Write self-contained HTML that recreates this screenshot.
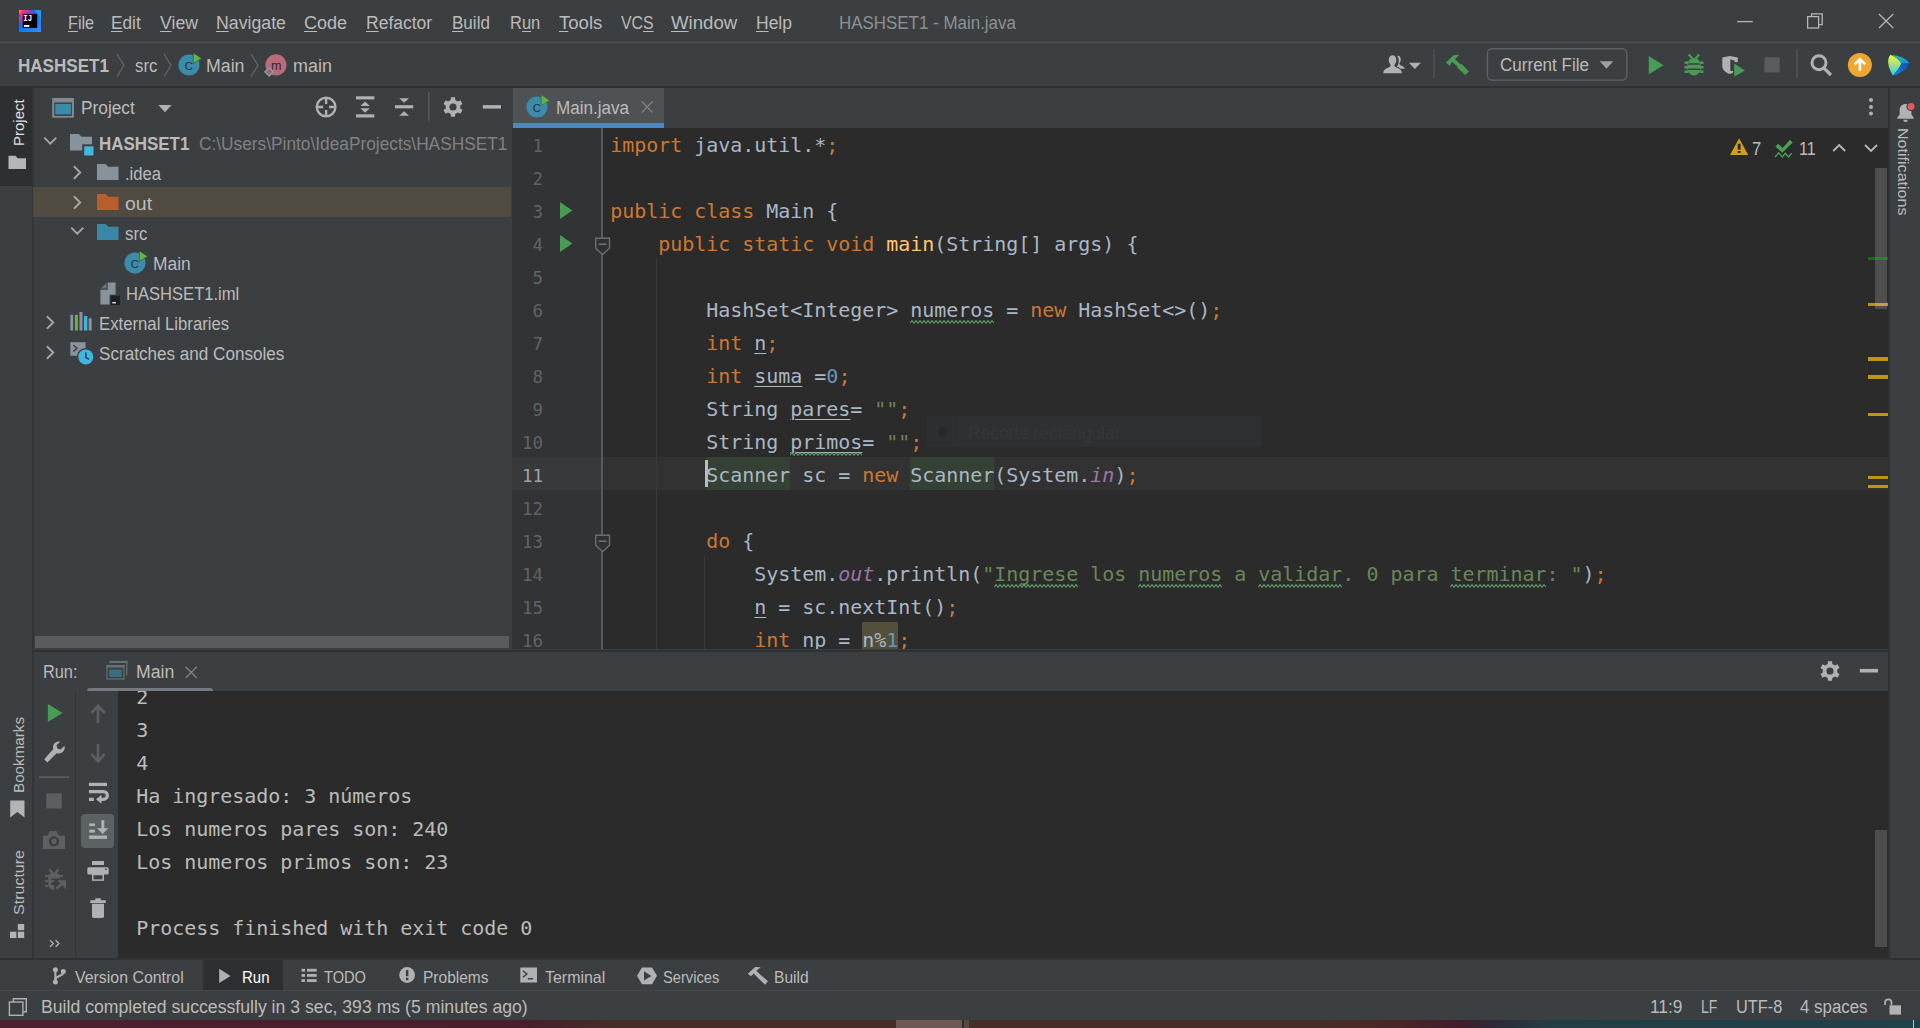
<!DOCTYPE html>
<html lang="en"><head><meta charset="utf-8"><title>HASHSET1 - Main.java</title>
<style>
html,body{margin:0;padding:0;background:#3c3f41;}
body{width:1920px;height:1028px;position:relative;overflow:hidden;font-family:"Liberation Sans", sans-serif;}
.r{position:absolute;display:block;}
.t{position:absolute;display:inline-block;white-space:pre;line-height:24px;height:24px;transform-origin:0 0;font-family:"Liberation Sans", sans-serif;}
.t u{text-decoration:underline;text-decoration-thickness:1px;text-underline-offset:1.500px;}
.c{position:absolute;white-space:pre;font-family:"DejaVu Sans Mono", "Liberation Mono", monospace;font-size:20px;line-height:33px;height:33px;color:#a9b7c6;letter-spacing:-0.04px;}
.k{color:#cc7832}.s{color:#6a8759}.n{color:#6897bb}.f{color:#ffc66d}.p{color:#9876aa;font-style:italic}
.ul{text-decoration:underline;text-decoration-thickness:1px;text-underline-offset:3px;}
.ln{position:absolute;white-space:pre;font-family:"DejaVu Sans Mono", "Liberation Mono", monospace;font-size:17.5px;line-height:33px;height:33px;color:#606366;text-align:right;width:40px;}
</style></head><body>
<div class="r" style="left:0px;top:42px;width:1920px;height:1px;background:#515456;"></div>
<div class="r" style="left:0px;top:86px;width:1920px;height:1.5px;background:#2f3133;"></div>
<div class="r" style="left:0px;top:87px;width:32px;height:933px;background:#3c3f41;"></div>
<div class="r" style="left:32px;top:87px;width:1.5px;height:871px;background:#323436;"></div>
<div class="r" style="left:0px;top:87px;width:32px;height:99px;background:#2d2f30;"></div>
<div class="r" style="left:1888px;top:87px;width:1.8px;height:871px;background:#2e3032;"></div>
<div class="r" style="left:33px;top:187px;width:478px;height:30px;background:#4f4b41;"></div>
<div class="r" style="left:35px;top:636px;width:474px;height:12px;background:#595b5d;"></div>
<div class="r" style="left:513px;top:88px;width:151px;height:40px;background:#4e5254;"></div>
<div class="r" style="left:513px;top:123px;width:151px;height:5px;background:#4a88c7;"></div>
<div class="r" style="left:512px;top:127.5px;width:1376px;height:1px;background:#323232;"></div>
<div class="r" style="left:512px;top:128px;width:1376px;height:521px;background:#2b2b2b;"></div>
<div class="r" style="left:512px;top:128px;width:90px;height:521px;background:#313335;"></div>
<div class="r" style="left:601px;top:128px;width:2px;height:521px;background:#5a5a5a;"></div>
<div class="r" style="left:603px;top:457px;width:1285px;height:33px;background:#323232;"></div>
<div class="r" style="left:512px;top:457px;width:89px;height:33px;background:#37393b;"></div>
<div class="r" style="left:656px;top:259px;width:1px;height:390px;background:#3a3a3a;"></div>
<div class="r" style="left:704px;top:556px;width:1px;height:93px;background:#3a3a3a;"></div>
<div class="r" style="left:927px;top:416px;width:334px;height:31px;background:#2e3032;"></div>
<div class="r" style="left:927px;top:416px;width:30px;height:31px;background:#2c2f32;"></div>
<div class="r" style="left:938px;top:427px;width:9px;height:9px;border-radius:5px;background:#272a2d"></div>
<span class="t " style="left:967.70px;top:421.26px;font-size:18px;color:#33373a;transform:scaleX(0.9646);">Recorte rectangular</span>
<div class="r" style="left:34px;top:649px;width:1854px;height:1px;background:#3c3f41;"></div>
<div class="r" style="left:34px;top:650px;width:1854px;height:1.6px;background:#2f3133;"></div>
<div class="r" style="left:34px;top:691px;width:1854px;height:266.5px;background:#2b2b2b;"></div>
<div class="r" style="left:34px;top:691px;width:84px;height:266.5px;background:#3c3f41;"></div>
<div class="r" style="left:75px;top:691px;width:1px;height:266.5px;background:#323436;"></div>
<div class="r" style="left:87px;top:687.5px;width:126px;height:3.5px;background:#747a80;border-radius:3px 3px 0 0"></div>
<div class="r" style="left:81px;top:814px;width:33px;height:34px;background:#5c6164;border-radius:4px"></div>
<div class="r" style="left:39px;top:776.5px;width:30px;height:1px;background:#555759;"></div>
<div class="r" style="left:1875px;top:830px;width:12px;height:117px;background:#4d4d4d;"></div>
<div class="r" style="left:1875px;top:168px;width:12px;height:141px;background:#4e4e4e;"></div>
<div class="r" style="left:1868px;top:257px;width:20px;height:3px;background:#116e15;"></div>
<div class="r" style="left:1868px;top:303.3px;width:20px;height:3px;background:#b8901a;"></div>
<div class="r" style="left:1875px;top:303.3px;width:12px;height:3px;background:#c0a040;"></div>
<div class="r" style="left:1875px;top:257px;width:12px;height:3px;background:#2f8133;"></div>
<div class="r" style="left:1868px;top:357.2px;width:20px;height:3.4px;background:#be9516;"></div>
<div class="r" style="left:1868px;top:375.3px;width:20px;height:3.4px;background:#be9516;"></div>
<div class="r" style="left:1868px;top:412.9px;width:20px;height:3.4px;background:#be9516;"></div>
<div class="r" style="left:1868px;top:475.8px;width:20px;height:3.4px;background:#be9516;"></div>
<div class="r" style="left:1868px;top:484.8px;width:20px;height:3.4px;background:#be9516;"></div>
<div class="r" style="left:0px;top:957.5px;width:1920px;height:2px;background:#2f3133;"></div>
<div class="r" style="left:202.5px;top:959.5px;width:80.5px;height:30.5px;background:#2d2f30;"></div>
<div class="r" style="left:0px;top:990px;width:1920px;height:1px;background:#45484a;"></div>
<div class="r" style="left:0px;top:1020px;width:1920px;height:8px;background:linear-gradient(90deg,#4b2131 0,#481e2c 520px,#46252a 560px,#452e27 620px,#452e27 1300px,#4a2626 1400px,#401c2c 1460px,#2c2b3a 1500px,#233d44 1545px,#20424a 1920px);"></div>
<div class="r" style="left:896px;top:1020px;width:66px;height:8px;background:#6b5a53;"></div>
<div class="r" style="left:962px;top:1020px;width:2px;height:8px;background:#3a2a27;"></div>
<div class="r" style="left:964px;top:1020px;width:5px;height:8px;background:#5a4843;"></div>
<div class="r" style="left:1912.5px;top:1020px;width:1.5px;height:8px;background:#b9c4c6;"></div>
<span class="t " style="left:67.80px;top:11.06px;font-size:18px;color:#bbbbbb;transform:scaleX(0.8995);"><u>F</u>ile</span>
<span class="t " style="left:111.00px;top:11.06px;font-size:18px;color:#bbbbbb;transform:scaleX(0.9571);"><u>E</u>dit</span>
<span class="t " style="left:160.20px;top:11.06px;font-size:18px;color:#bbbbbb;transform:scaleX(0.9818);"><u>V</u>iew</span>
<span class="t " style="left:216.00px;top:11.06px;font-size:18px;color:#bbbbbb;transform:scaleX(0.9839);"><u>N</u>avigate</span>
<span class="t " style="left:303.80px;top:11.06px;font-size:18px;color:#bbbbbb;transform:scaleX(1.0012);"><u>C</u>ode</span>
<span class="t " style="left:366.00px;top:11.06px;font-size:18px;color:#bbbbbb;transform:scaleX(0.9731);"><u>R</u>efactor</span>
<span class="t " style="left:452.40px;top:11.06px;font-size:18px;color:#bbbbbb;transform:scaleX(0.9464);"><u>B</u>uild</span>
<span class="t " style="left:510.40px;top:11.06px;font-size:18px;color:#bbbbbb;transform:scaleX(0.9173);">R<u>u</u>n</span>
<span class="t " style="left:559.20px;top:11.06px;font-size:18px;color:#bbbbbb;transform:scaleX(1.0302);"><u>T</u>ools</span>
<span class="t " style="left:620.70px;top:11.06px;font-size:18px;color:#bbbbbb;transform:scaleX(0.8803);">VC<u>S</u></span>
<span class="t " style="left:670.60px;top:11.06px;font-size:18px;color:#bbbbbb;transform:scaleX(1.0339);"><u>W</u>indow</span>
<span class="t " style="left:756.40px;top:11.06px;font-size:18px;color:#bbbbbb;transform:scaleX(0.9722);"><u>H</u>elp</span>
<span class="t " style="left:839.00px;top:11.06px;font-size:18px;color:#8e9193;transform:scaleX(0.9406);">HASHSET1 - Main.java</span>
<span class="t " style="left:18.00px;top:54.16px;font-size:18px;color:#bbbbbb;font-weight:bold;transform:scaleX(0.9466);">HASHSET1</span>
<span class="t " style="left:135.00px;top:54.16px;font-size:18px;color:#bbbbbb;transform:scaleX(0.9333);">src</span>
<span class="t " style="left:206.40px;top:54.16px;font-size:18px;color:#bbbbbb;transform:scaleX(0.9868);">Main</span>
<span class="t " style="left:293.00px;top:54.16px;font-size:18px;color:#bbbbbb;transform:scaleX(0.9970);">main</span>
<span class="t " style="left:1500.20px;top:53.26px;font-size:18px;color:#bbbbbb;transform:scaleX(0.9465);">Current File</span>
<span class="t " style="left:81.40px;top:95.56px;font-size:18px;color:#bbbbbb;transform:scaleX(0.9602);">Project</span>
<span class="t " style="left:98.50px;top:131.76px;font-size:18px;color:#bbbbbb;font-weight:bold;transform:scaleX(0.9414);">HASHSET1</span>
<span class="t " style="left:199.30px;top:131.76px;font-size:18px;color:#808284;transform:scaleX(0.9604);">C:\Users\Pinto\IdeaProjects\HASHSET1</span>
<span class="t " style="left:125.10px;top:161.76px;font-size:18px;color:#bbbbbb;transform:scaleX(0.9245);">.idea</span>
<span class="t " style="left:125.10px;top:191.76px;font-size:18px;color:#bbbbbb;transform:scaleX(1.0826);">out</span>
<span class="t " style="left:125.10px;top:221.76px;font-size:18px;color:#bbbbbb;transform:scaleX(0.9333);">src</span>
<span class="t " style="left:152.50px;top:251.76px;font-size:18px;color:#bbbbbb;transform:scaleX(0.9663);">Main</span>
<span class="t " style="left:125.60px;top:281.76px;font-size:18px;color:#bbbbbb;transform:scaleX(0.9209);">HASHSET1.iml</span>
<span class="t " style="left:98.50px;top:311.76px;font-size:18px;color:#bbbbbb;transform:scaleX(0.9296);">External Libraries</span>
<span class="t " style="left:98.50px;top:341.76px;font-size:18px;color:#bbbbbb;transform:scaleX(0.9502);">Scratches and Consoles</span>
<span class="t " style="left:555.70px;top:96.06px;font-size:18px;color:#bbbbbb;transform:scaleX(0.9475);">Main.java</span>
<span class="t " style="left:1752.20px;top:137.16px;font-size:18px;color:#bbbbbb;transform:scaleX(0.9285);">7</span>
<span class="t " style="left:1798.50px;top:137.16px;font-size:18px;color:#bbbbbb;transform:scaleX(0.8936);">11</span>
<span class="t " style="left:42.70px;top:659.76px;font-size:18px;color:#bbbbbb;transform:scaleX(0.9071);">Run:</span>
<span class="t " style="left:135.70px;top:659.76px;font-size:18px;color:#bbbbbb;transform:scaleX(0.9791);">Main</span>
<span class="t " style="left:75.20px;top:965.28px;font-size:16.5px;color:#bbbbbb;transform:scaleX(0.9635);">Version Control</span>
<span class="t " style="left:242.20px;top:965.28px;font-size:16.5px;color:#ffffff;transform:scaleX(0.9082);">Run</span>
<span class="t " style="left:324.20px;top:965.28px;font-size:16.5px;color:#bbbbbb;transform:scaleX(0.8865);">TODO</span>
<span class="t " style="left:423.40px;top:965.28px;font-size:16.5px;color:#bbbbbb;transform:scaleX(0.9397);">Problems</span>
<span class="t " style="left:545.40px;top:965.28px;font-size:16.5px;color:#bbbbbb;transform:scaleX(0.9670);">Terminal</span>
<span class="t " style="left:663.40px;top:965.28px;font-size:16.5px;color:#bbbbbb;transform:scaleX(0.8897);">Services</span>
<span class="t " style="left:774.20px;top:965.28px;font-size:16.5px;color:#bbbbbb;transform:scaleX(0.9454);">Build</span>
<span class="t " style="left:40.95px;top:994.96px;font-size:18px;color:#bbbbbb;transform:scaleX(0.9809);">Build completed successfully in 3 sec, 393 ms (5 minutes ago)</span>
<span class="t " style="left:1650.20px;top:994.96px;font-size:18px;color:#bbbbbb;transform:scaleX(0.9643);">11:9</span>
<span class="t " style="left:1701.40px;top:994.96px;font-size:18px;color:#bbbbbb;transform:scaleX(0.7756);">LF</span>
<span class="t " style="left:1736.40px;top:994.96px;font-size:18px;color:#bbbbbb;transform:scaleX(0.9078);">UTF-8</span>
<span class="t " style="left:1799.70px;top:994.96px;font-size:18px;color:#bbbbbb;transform:scaleX(0.9369);">4 spaces</span>
<span class="t" style="left:6.63px;top:145.70px;font-size:15.2px;color:#e0e0e0;transform:rotate(-90deg) scaleX(0.9877)">Project</span>
<span class="t" style="left:6.53px;top:793.00px;font-size:15.2px;color:#bbbbbb;transform:rotate(-90deg) scaleX(1.0004)">Bookmarks</span>
<span class="t" style="left:6.63px;top:914.80px;font-size:15.2px;color:#bbbbbb;transform:rotate(-90deg) scaleX(1.0548)">Structure</span>
<span class="t" style="left:1914.77px;top:128.00px;font-size:15.2px;color:#bbbbbb;transform:rotate(90deg) scaleX(1.0576)">Notifications</span>
<div class="r" style="left:512px;top:128px;width:1376px;height:521px;overflow:hidden"><div class="r" style="left:-512px;top:-128px;width:1920px;height:1028px">
<div class="r" style="left:706.3px;top:457px;width:84px;height:33px;background:#344134;"></div>
<div class="r" style="left:910.3px;top:457px;width:84px;height:33px;background:#344134;"></div>
<div class="r" style="left:862.3px;top:622px;width:36px;height:33px;background:#52503a;"></div>
<div class="c" style="left:610.3px;top:129px"><span class="k">import</span> java.util.*<span class="k">;</span></div>
<div class="c" style="left:610.3px;top:195px"><span class="k">public class</span> Main {</div>
<div class="c" style="left:658.3px;top:228px"><span class="k">public static void</span> <span class="f">main</span>(String[] args) {</div>
<div class="c" style="left:706.3px;top:294px">HashSet&lt;Integer&gt; numeros = <span class="k">new</span> HashSet&lt;&gt;()<span class="k">;</span></div>
<div class="c" style="left:706.3px;top:327px"><span class="k">int</span> <span class="ul">n</span><span class="k">;</span></div>
<div class="c" style="left:706.3px;top:360px"><span class="k">int</span> <span class="ul">suma</span> =<span class="n">0</span><span class="k">;</span></div>
<div class="c" style="left:706.3px;top:393px">String <span class="ul">pares</span>= <span class="s">""</span><span class="k">;</span></div>
<div class="c" style="left:706.3px;top:426px">String <span class="ul">primos</span>= <span class="s">""</span><span class="k">;</span></div>
<div class="c" style="left:706.3px;top:459px">Scanner sc = <span class="k">new</span> Scanner(System.<span class="p">in</span>)<span class="k">;</span></div>
<div class="c" style="left:706.3px;top:525px"><span class="k">do</span> {</div>
<div class="c" style="left:754.3px;top:558px">System.<span class="p">out</span>.println(<span class="s">"Ingrese los numeros a validar. 0 para terminar: "</span>)<span class="k">;</span></div>
<div class="c" style="left:754.3px;top:591px"><span class="ul">n</span> = sc.nextInt()<span class="k">;</span></div>
<div class="c" style="left:754.3px;top:624px"><span class="k">int</span> np = n%<span class="n">1</span><span class="k">;</span></div>
<svg class="r" style="left:910.3px;top:319.6px;" width="84" height="4" viewBox="0 0 84 4"><path d="M0 3.300 L2 0.6 L4 3.3 L6 0.6 L8 3.3 L10 0.6 L12 3.3 L14 0.6 L16 3.3 L18 0.6 L20 3.3 L22 0.6 L24 3.3 L26 0.6 L28 3.3 L30 0.6 L32 3.3 L34 0.6 L36 3.3 L38 0.6 L40 3.3 L42 0.6 L44 3.3 L46 0.6 L48 3.3 L50 0.6 L52 3.3 L54 0.6 L56 3.3 L58 0.6 L60 3.3 L62 0.6 L64 3.3 L66 0.6 L68 3.3 L70 0.6 L72 3.3 L74 0.6 L76 3.3 L78 0.6 L80 3.3 L82 0.6 L84 3.3" fill="none" stroke="#619f6a" stroke-width="1.050"/></svg>
<svg class="r" style="left:790.3px;top:451.6px;" width="72" height="4" viewBox="0 0 72 4"><path d="M0 3.300 L2 0.6 L4 3.3 L6 0.6 L8 3.3 L10 0.6 L12 3.3 L14 0.6 L16 3.3 L18 0.6 L20 3.3 L22 0.6 L24 3.3 L26 0.6 L28 3.3 L30 0.6 L32 3.3 L34 0.6 L36 3.3 L38 0.6 L40 3.3 L42 0.6 L44 3.3 L46 0.6 L48 3.3 L50 0.6 L52 3.3 L54 0.6 L56 3.3 L58 0.6 L60 3.3 L62 0.6 L64 3.3 L66 0.6 L68 3.3 L70 0.6 L72 3.3" fill="none" stroke="#619f6a" stroke-width="1.050"/></svg>
<svg class="r" style="left:994.3px;top:583.6px;" width="84" height="4" viewBox="0 0 84 4"><path d="M0 3.300 L2 0.6 L4 3.3 L6 0.6 L8 3.3 L10 0.6 L12 3.3 L14 0.6 L16 3.3 L18 0.6 L20 3.3 L22 0.6 L24 3.3 L26 0.6 L28 3.3 L30 0.6 L32 3.3 L34 0.6 L36 3.3 L38 0.6 L40 3.3 L42 0.6 L44 3.3 L46 0.6 L48 3.3 L50 0.6 L52 3.3 L54 0.6 L56 3.3 L58 0.6 L60 3.3 L62 0.6 L64 3.3 L66 0.6 L68 3.3 L70 0.6 L72 3.3 L74 0.6 L76 3.3 L78 0.6 L80 3.3 L82 0.6 L84 3.3" fill="none" stroke="#619f6a" stroke-width="1.050"/></svg>
<svg class="r" style="left:1138.3px;top:583.6px;" width="84" height="4" viewBox="0 0 84 4"><path d="M0 3.300 L2 0.6 L4 3.3 L6 0.6 L8 3.3 L10 0.6 L12 3.3 L14 0.6 L16 3.3 L18 0.6 L20 3.3 L22 0.6 L24 3.3 L26 0.6 L28 3.3 L30 0.6 L32 3.3 L34 0.6 L36 3.3 L38 0.6 L40 3.3 L42 0.6 L44 3.3 L46 0.6 L48 3.3 L50 0.6 L52 3.3 L54 0.6 L56 3.3 L58 0.6 L60 3.3 L62 0.6 L64 3.3 L66 0.6 L68 3.3 L70 0.6 L72 3.3 L74 0.6 L76 3.3 L78 0.6 L80 3.3 L82 0.6 L84 3.3" fill="none" stroke="#619f6a" stroke-width="1.050"/></svg>
<svg class="r" style="left:1258.3px;top:583.6px;" width="84" height="4" viewBox="0 0 84 4"><path d="M0 3.300 L2 0.6 L4 3.3 L6 0.6 L8 3.3 L10 0.6 L12 3.3 L14 0.6 L16 3.3 L18 0.6 L20 3.3 L22 0.6 L24 3.3 L26 0.6 L28 3.3 L30 0.6 L32 3.3 L34 0.6 L36 3.3 L38 0.6 L40 3.3 L42 0.6 L44 3.3 L46 0.6 L48 3.3 L50 0.6 L52 3.3 L54 0.6 L56 3.3 L58 0.6 L60 3.3 L62 0.6 L64 3.3 L66 0.6 L68 3.3 L70 0.6 L72 3.3 L74 0.6 L76 3.3 L78 0.6 L80 3.3 L82 0.6 L84 3.3" fill="none" stroke="#619f6a" stroke-width="1.050"/></svg>
<svg class="r" style="left:1450.3px;top:583.6px;" width="96" height="4" viewBox="0 0 96 4"><path d="M0 3.300 L2 0.6 L4 3.3 L6 0.6 L8 3.3 L10 0.6 L12 3.3 L14 0.6 L16 3.3 L18 0.6 L20 3.3 L22 0.6 L24 3.3 L26 0.6 L28 3.3 L30 0.6 L32 3.3 L34 0.6 L36 3.3 L38 0.6 L40 3.3 L42 0.6 L44 3.3 L46 0.6 L48 3.3 L50 0.6 L52 3.3 L54 0.6 L56 3.3 L58 0.6 L60 3.3 L62 0.6 L64 3.3 L66 0.6 L68 3.3 L70 0.6 L72 3.3 L74 0.6 L76 3.3 L78 0.6 L80 3.3 L82 0.6 L84 3.3 L86 0.6 L88 3.3 L90 0.6 L92 3.3 L94 0.6 L96 3.3" fill="none" stroke="#619f6a" stroke-width="1.050"/></svg>
<div class="r" style="left:705px;top:460px;width:2.5px;height:27px;background:#bbbbbb;"></div>
<div class="ln" style="left:503px;top:129.5px;color:#606366">1</div>
<div class="ln" style="left:503px;top:162.5px;color:#606366">2</div>
<div class="ln" style="left:503px;top:195.5px;color:#606366">3</div>
<div class="ln" style="left:503px;top:228.5px;color:#606366">4</div>
<div class="ln" style="left:503px;top:261.5px;color:#606366">5</div>
<div class="ln" style="left:503px;top:294.5px;color:#606366">6</div>
<div class="ln" style="left:503px;top:327.5px;color:#606366">7</div>
<div class="ln" style="left:503px;top:360.5px;color:#606366">8</div>
<div class="ln" style="left:503px;top:393.5px;color:#606366">9</div>
<div class="ln" style="left:503px;top:426.5px;color:#606366">10</div>
<div class="ln" style="left:503px;top:459.5px;color:#a4a3a3">11</div>
<div class="ln" style="left:503px;top:492.5px;color:#606366">12</div>
<div class="ln" style="left:503px;top:525.5px;color:#606366">13</div>
<div class="ln" style="left:503px;top:558.5px;color:#606366">14</div>
<div class="ln" style="left:503px;top:591.5px;color:#606366">15</div>
<div class="ln" style="left:503px;top:624.5px;color:#606366">16</div>
</div></div>
<div class="r" style="left:118px;top:691px;width:1770px;height:266px;overflow:hidden"><div class="r" style="left:-118px;top:-691px;width:1920px;height:1028px">
<div class="c" style="left:136.3px;top:681px;color:#bbbbbb">2</div>
<div class="c" style="left:136.3px;top:714px;color:#bbbbbb">3</div>
<div class="c" style="left:136.3px;top:747px;color:#bbbbbb">4</div>
<div class="c" style="left:136.3px;top:780px;color:#bbbbbb">Ha ingresado: 3 números</div>
<div class="c" style="left:136.3px;top:813px;color:#bbbbbb">Los numeros pares son: 240</div>
<div class="c" style="left:136.3px;top:846px;color:#bbbbbb">Los numeros primos son: 23</div>
<div class="c" style="left:136.3px;top:912px;color:#bbbbbb">Process finished with exit code 0</div>
</div></div>
<svg class="r" style="left:19px;top:10px;" width="22" height="22" viewBox="0 0 22 22"><defs><linearGradient id="lg1" x1="0" y1="0" x2="1" y2="1"><stop offset="0" stop-color="#ff9a2e"/><stop offset="0.12" stop-color="#fe2d79"/><stop offset="0.38" stop-color="#3a5bd6"/><stop offset="0.5" stop-color="#087cfa"/><stop offset="1" stop-color="#3d8bff"/></linearGradient>
<linearGradient id="lg2" x1="0" y1="0" x2="1" y2="1"><stop offset="0" stop-color="#3a0030"/><stop offset="0.6" stop-color="#0c0008"/><stop offset="1" stop-color="#000"/></linearGradient></defs>
<rect width="22" height="22" fill="url(#lg1)"/><path d="M15 0H22V9L18.5 3.5Z" fill="#1fa8ff" opacity=".7"/>
<rect x="3.7" y="3.9" width="14.5" height="14" fill="url(#lg2)"/>
<text x="4.3" y="11.2" font-family="Liberation Mono, monospace" font-weight="bold" font-size="8.6" fill="#fff" textLength="8.8" lengthAdjust="spacingAndGlyphs">IJ</text>
<rect x="5" y="15" width="5.3" height="1.9" fill="#fff"/></svg>
<svg class="r" style="left:1730px;top:8px;" width="180" height="28" viewBox="0 0 180 28"><g fill="none" stroke="#b4b6b7" stroke-width="1.3"><path d="M7.2 13.6H22.7"/><rect x="77.6" y="8.6" width="11" height="11.4"/><path d="M81.6 8.6V5.8H92.2V16.6H88.6"/><path d="M149 6L163.2 20M163.2 6L149 20"/></g></svg>
<svg class="r" style="left:116px;top:53px;" width="10" height="25" viewBox="0 0 10 25"><path d="M1 1.2L8 12.3L1 23.5" fill="none" stroke="#626567" stroke-width="1.3"/></svg>
<svg class="r" style="left:163.3px;top:53px;" width="10" height="25" viewBox="0 0 10 25"><path d="M1 1.2L8 12.3L1 23.5" fill="none" stroke="#626567" stroke-width="1.3"/></svg>
<svg class="r" style="left:250.3px;top:53px;" width="10" height="25" viewBox="0 0 10 25"><path d="M1 1.2L8 12.3L1 23.5" fill="none" stroke="#626567" stroke-width="1.3"/></svg>
<svg class="r" style="left:177.1px;top:50.8px;" width="26" height="27" viewBox="0 0 26 27"><circle cx="12" cy="14" r="10.6" fill="#3c8ba8"/>
<path d="M16.300 1.800L24.700 7.400L16.300 12.500Z" fill="#62b543" stroke="#3c3f41" stroke-width="0.600"/>
<text x="11.700" y="18.700" text-anchor="middle" font-family="Liberation Sans, sans-serif" font-size="11.200" fill="#21333d">C</text></svg>
<svg class="r" style="left:123.2px;top:249px;" width="26" height="27" viewBox="0 0 26 27"><circle cx="12" cy="14" r="10.6" fill="#3c8ba8"/>
<path d="M16.300 1.800L24.700 7.400L16.300 12.500Z" fill="#62b543" stroke="#3c3f41" stroke-width="0.600"/>
<text x="11.700" y="18.700" text-anchor="middle" font-family="Liberation Sans, sans-serif" font-size="11.200" fill="#21333d">C</text></svg>
<svg class="r" style="left:524.9px;top:92.8px;" width="26" height="27" viewBox="0 0 26 27"><circle cx="12" cy="14" r="10.6" fill="#3c8ba8"/>
<path d="M16.300 1.800L24.700 7.400L16.300 12.500Z" fill="#62b543" stroke="#4e5254" stroke-width="0.600"/>
<text x="11.700" y="18.700" text-anchor="middle" font-family="Liberation Sans, sans-serif" font-size="11.200" fill="#21333d">C</text></svg>
<svg class="r" style="left:262px;top:52px;" width="28" height="28" viewBox="0 0 28 28"><circle cx="14" cy="12.900" r="10.600" fill="#ba6b7a"/>
<text x="14.300" y="17.700" text-anchor="middle" font-family="Liberation Sans, sans-serif" font-size="12.600" fill="#3b2229">m</text>
<path d="M7.200 14.300L12.700 19.800L7.200 25.300L1.700 19.800Z" fill="#3c3f41" opacity=".55"/><path d="M7.200 15.700L11.300 19.800L7.200 23.900L3.100 19.800Z" fill="#a35f6c" stroke="#8d9aa3" stroke-width="1.700"/></svg>
<svg class="r" style="left:1376px;top:44px;" width="544" height="42" viewBox="0 0 544 42">
<g fill="#afb1b3">
<path d="M21.300 11.900c2.200-0.600 3.600 1.200 3.400 3.900c-0.100 1.600-0.700 3-1.400 3.800c0 0.900 0.500 1.400 1.800 2c2.300 1 3.500 1.700 3.900 3.200h-4.300c-1-0.900-2.300-1.500-3.700-2c0.900-1.600 1.700-3.900 1.700-6.100c0-1.900-0.500-3.600-1.400-4.800z"/>
<path d="M16.600 11.300c2.200 0 3.700 1.900 3.700 4.600c0 2-0.800 3.900-1.900 5c0 1.200 0.500 1.900 2.300 2.600c3.400 1.200 5.200 2.600 5.200 5.800H7.200c0-3.200 1.900-4.600 5.200-5.800c1.800-0.700 2.300-1.400 2.300-2.600c-1.100-1.100-1.900-3-1.900-5c0-2.700 1.500-4.600 3.800-4.600z" stroke="#3c3f41" stroke-width="1.100" paint-order="stroke"/>
</g>
<path d="M32.900 18.800h12l-6 6.200z" fill="#afb1b3"/>
<rect x="57.4" y="5" width="1.2" height="29.7" fill="#56595b"/>
<path d="M69.980 18.540L77.420 11.250L83.400 10.380L79.170 15.330L84.300 20.300L85.600 19.900L92.900 27.600L89.100 31.100L81.300 23.600L81.500 22.600L76.250 17.960L73.330 21.900Z" fill="#499c54"/>
<rect x="111.4" y="4.7" width="139.4" height="31.4" rx="4.5" fill="none" stroke="#5e6163" stroke-width="1.4"/>
<path d="M223.7 17.2h13.6l-6.8 7.6z" fill="#9da0a2"/>
<path d="M272.75 12V30.3L287.6 21.2Z" fill="#499c54"/>
<g fill="#499c54">
<path d="M318 14c3.900 0 6.600 3.200 6.600 8.600c0 5.400-2.700 8.800-6.600 8.800s-6.600-3.400-6.600-8.800c0-5.400 2.700-8.600 6.600-8.600zM311 19.300v1.500h14v-1.500zM311 24.500v1.500h14v-1.500z" fill-rule="evenodd"/>
<path d="M311.900 11.200l1.700-1.500l3.600 4l-1.900 1.300zM324.100 11.200l-1.700-1.500l-3.600 4l1.900 1.300z"/>
<rect x="308.500" y="17.400" width="4" height="2.600"/><rect x="308.500" y="21.900" width="4" height="2.600"/><rect x="308.500" y="26.400" width="4" height="2.600"/>
<rect x="323.500" y="17.400" width="4" height="2.600"/><rect x="323.500" y="21.900" width="4" height="2.600"/><rect x="323.500" y="26.400" width="4" height="2.600"/>
</g>
<path d="M346.300 13.600L353.900 12L361.800 13.600V22C361.800 26 358 28.600 353.900 30.100C349.800 28.600 346.300 26 346.300 22Z" fill="#afb1b3"/>
<path d="M354.300 15.300L358.600 16.700V27.100H354.300Z" fill="#3c3f41"/>
<rect x="357.100" y="18.100" width="6" height="13" fill="#3c3f41"/>
<path d="M358.200 19.600L368.900 26.400L358.200 32.800Z" fill="#499c54"/>
<rect x="388.400" y="13.400" width="15.300" height="15" fill="#5a5c5e"/>
<rect x="420.300" y="5" width="1.200" height="29.700" fill="#56595b"/>
<circle cx="443" cy="18.700" r="7" fill="none" stroke="#afb1b3" stroke-width="3"/>
<path d="M447.800 24L455 31" stroke="#afb1b3" stroke-width="3.200" fill="none"/>
<circle cx="483.900" cy="20.900" r="12" fill="#f0a732"/>
<path d="M483.900 15.500v11.600M478.600 20.300l5.300-5.300l5.300 5.300" fill="none" stroke="#fff" stroke-width="2.600"/>
<defs><linearGradient id="cw1" x1="0" y1="0" x2="0" y2="1"><stop offset="0" stop-color="#f8f63a"/><stop offset="0.450" stop-color="#a6e37e"/><stop offset="1" stop-color="#2fcde2"/></linearGradient>
<linearGradient id="cw2" x1="0" y1="0" x2="1" y2="0.500"><stop offset="0" stop-color="#3ad36c"/><stop offset="0.500" stop-color="#22b0a8"/><stop offset="1" stop-color="#1890ea"/></linearGradient>
<linearGradient id="cw3" x1="1" y1="0" x2="0" y2="1"><stop offset="0" stop-color="#1a46b2"/><stop offset="1" stop-color="#0a92ea"/></linearGradient></defs>
<path d="M514.460 10.670Q523.070 14.460 525.250 19.420Q523.580 24.520 516.790 31.380Q508.900 17.240 514.460 10.670Z" fill="url(#cw1)"/>
<path d="M514.460 10.670Q528.700 11.560 533.710 19.420L525.250 19.420Q523.070 14.460 514.460 10.670Z" fill="url(#cw2)"/>
<path d="M525.250 19.420L533.710 19.420Q528.750 28.600 516.790 31.380Q523.580 24.520 525.250 19.420Z" fill="url(#cw3)"/>
</svg>
<svg class="r" style="left:50px;top:95px;" width="130" height="25" viewBox="0 0 130 25"><rect x="2.200" y="3" width="21.700" height="19.700" fill="#808b92"/><rect x="4.200" y="7.400" width="17.700" height="13.500" fill="#3c3f41"/><rect x="5.300" y="8.900" width="15.700" height="10.500" fill="#3d8aa8"/>
<path d="M108.400 10h13.200l-6.600 7.200z" fill="#afb1b3"/></svg>
<svg class="r" style="left:310px;top:92px;" width="200" height="30" viewBox="0 0 200 30"><g fill="none" stroke="#afb1b3" stroke-width="2.400"><circle cx="16.100" cy="15" r="9.300"/><path d="M16.100 5.700v6.300M16.100 18v6.300M6.800 15h6.300M19.100 15h6.300"/></g>
<g fill="#afb1b3"><rect x="46" y="4.300" width="18.300" height="3.100"/><rect x="46" y="22.300" width="18.300" height="3.200"/><path d="M55.100 9.500l4.700 4.500h-9.400zM55.100 20.700l4.700-4.400h-9.400z"/>
<rect x="85" y="13.200" width="18.200" height="3.100"/><path d="M94.100 10.800l4.900-4.600h-9.800zM94.100 19.200l4.900 4.600h-9.800z"/>
<rect x="172.800" y="13.100" width="18.200" height="3.500"/></g>
<rect x="118" y="-1" width="1.600" height="29.700" fill="#56595b"/>
<path d="M140.71 7.96 L140.92 5.22 L145.08 5.22 L145.29 7.96 L147.95 9.50 L150.43 8.31 L152.51 11.91 L150.24 13.46 L150.24 16.54 L152.51 18.09 L150.43 21.69 L147.95 20.50 L145.29 22.04 L145.08 24.78 L140.92 24.78 L140.71 22.04 L138.05 20.50 L135.57 21.69 L133.49 18.09 L135.76 16.54 L135.76 13.46 L133.49 11.91 L135.57 8.31 L138.05 9.50Z M139.40 15.00 a3.60 3.60 0 1 0 7.20 0 a3.60 3.60 0 1 0 -7.20 0Z" fill="#afb1b3" fill-rule="evenodd"/></svg>
<svg class="r" style="left:1815px;top:656px;" width="70" height="30" viewBox="0 0 70 30"><path d="M12.71 7.96 L12.92 5.22 L17.08 5.22 L17.29 7.96 L19.95 9.50 L22.43 8.31 L24.51 11.91 L22.24 13.46 L22.24 16.54 L24.51 18.09 L22.43 21.69 L19.95 20.50 L17.29 22.04 L17.08 24.78 L12.92 24.78 L12.71 22.04 L10.05 20.50 L7.57 21.69 L5.49 18.09 L7.76 16.54 L7.76 13.46 L5.49 11.91 L7.57 8.31 L10.05 9.50Z M11.40 15.00 a3.60 3.60 0 1 0 7.20 0 a3.60 3.60 0 1 0 -7.20 0Z" fill="#afb1b3" fill-rule="evenodd"/><rect x="44.800" y="12.900" width="18.200" height="3.600" fill="#afb1b3"/></svg>
<svg class="r" style="left:640px;top:100px;" width="14" height="14" viewBox="0 0 14 14"><path d="M1.700 1.500L12.500 12.500M12.500 1.500L1.700 12.500" stroke="#7f8284" stroke-width="1.300" fill="none"/></svg>
<svg class="r" style="left:184px;top:665px;" width="14" height="14" viewBox="0 0 14 14"><path d="M1.600 1.700L12.800 13M12.800 1.700L1.600 13" stroke="#7f8284" stroke-width="1.300" fill="none"/></svg>
<svg class="r" style="left:1867px;top:97px;" width="8" height="22" viewBox="0 0 8 22"><g fill="#afb1b3"><circle cx="4" cy="3.100" r="2"/><circle cx="4" cy="9.900" r="2"/><circle cx="4" cy="16.600" r="2"/></g></svg>
<svg class="r" style="left:43px;top:136px;" width="15" height="10" viewBox="0 0 15 10"><path d="M1.300 1.600L7.300 7.600L13.300 1.600" fill="none" stroke="#a4a7a9" stroke-width="1.900"/></svg>
<svg class="r" style="left:72px;top:165px;" width="11" height="16" viewBox="0 0 11 16"><path d="M1.900 1.300L8.200 7.500L1.900 13.700" fill="none" stroke="#a4a7a9" stroke-width="1.900"/></svg>
<svg class="r" style="left:72px;top:195px;" width="11" height="16" viewBox="0 0 11 16"><path d="M1.900 1.300L8.200 7.500L1.900 13.700" fill="none" stroke="#a4a7a9" stroke-width="1.900"/></svg>
<svg class="r" style="left:70px;top:226px;" width="15" height="10" viewBox="0 0 15 10"><path d="M1.300 1.600L7.300 7.600L13.300 1.600" fill="none" stroke="#a4a7a9" stroke-width="1.900"/></svg>
<svg class="r" style="left:45px;top:315px;" width="11" height="16" viewBox="0 0 11 16"><path d="M1.900 1.300L8.200 7.500L1.900 13.700" fill="none" stroke="#a4a7a9" stroke-width="1.900"/></svg>
<svg class="r" style="left:45px;top:345px;" width="11" height="16" viewBox="0 0 11 16"><path d="M1.900 1.300L8.200 7.500L1.900 13.700" fill="none" stroke="#a4a7a9" stroke-width="1.900"/></svg>
<svg class="r" style="left:70px;top:133px;" width="26" height="24" viewBox="0 0 26 24"><path d="M0 1H8.800L11.500 3.700H22V17.600H0Z" fill="#87929a"/><rect x="12.200" y="11.300" width="12.800" height="12.700" fill="#3c3f41"/><rect x="14.200" y="13.300" width="9.300" height="9.200" fill="#40b6e0"/></svg>
<svg class="r" style="left:97.3px;top:164.3px;" width="22" height="17" viewBox="0 0 22 17"><path d="M0 0H8.600L11.300 2.700H21.500V16H0Z" fill="#87929a"/></svg>
<svg class="r" style="left:97.3px;top:194.3px;" width="22" height="17" viewBox="0 0 22 17"><path d="M0 0H8.600L11.300 2.700H21.500V16H0Z" fill="#b85e2d"/></svg>
<svg class="r" style="left:97.3px;top:224.3px;" width="22" height="17" viewBox="0 0 22 17"><path d="M0 0H8.600L11.300 2.700H21.500V16H0Z" fill="#3987a4"/></svg>
<svg class="r" style="left:100px;top:282px;" width="21" height="24" viewBox="0 0 21 24"><path d="M7.700 0.400H15.600V22.600H0.400V7.700H7.700Z" fill="#87929a"/><path d="M6.500 0.900V6.500H0.900Z" fill="#87929a" opacity=".65"/><rect x="9.600" y="12.700" width="11" height="10.900" fill="#3c3f41"/><rect x="10.600" y="13.700" width="9.200" height="9.200" fill="#1e1f20"/><rect x="12.300" y="20" width="3.600" height="1.400" fill="#e8e8e8"/></svg>
<svg class="r" style="left:70px;top:311px;" width="23" height="21" viewBox="0 0 23 21"><g fill="#87929a"><rect x="0.300" y="3.900" width="2.800" height="15.600"/><rect x="9.500" y="1" width="3" height="18.500"/><rect x="18.700" y="7.300" width="3" height="12.200"/></g><rect x="4.900" y="3.900" width="3" height="15.600" fill="#62b543"/><rect x="14" y="5" width="3.300" height="14.500" fill="#40b6e0"/></svg>
<svg class="r" style="left:70px;top:341px;" width="25" height="25" viewBox="0 0 25 25"><rect x="0.300" y="1.200" width="15.300" height="13.600" fill="#87929a"/><path d="M3.400 4.200L7 7.300L3.400 10.400" fill="none" stroke="#3c3f41" stroke-width="1.400"/><circle cx="15.800" cy="15.900" r="9" fill="#3c3f41"/><circle cx="15.800" cy="15.900" r="7.500" fill="#40b6e0"/><path d="M15.800 11.400V16.300L19 18.400" fill="none" stroke="#2b3c45" stroke-width="1.500"/></svg>
<svg class="r" style="left:559px;top:202px;" width="15" height="18" viewBox="0 0 15 18"><path d="M1 0V17L13.400 8.500Z" fill="#499c54"/></svg>
<svg class="r" style="left:559px;top:235px;" width="15" height="18" viewBox="0 0 15 18"><path d="M1 0V17L13.400 8.500Z" fill="#499c54"/></svg>
<svg class="r" style="left:594px;top:236.5px;" width="18" height="20" viewBox="0 0 18 20"><path d="M1.700 1.200H15.500V11.300L8.600 17.600L1.700 11.300Z" fill="#2f3133" stroke="#6b6e70" stroke-width="1.400"/><path d="M4.800 7.200H12.400" stroke="#7d8082" stroke-width="1.300"/></svg>
<svg class="r" style="left:594px;top:533.5px;" width="18" height="20" viewBox="0 0 18 20"><path d="M1.700 1.200H15.500V11.300L8.600 17.600L1.700 11.300Z" fill="#2f3133" stroke="#6b6e70" stroke-width="1.400"/><path d="M4.800 7.200H12.400" stroke="#7d8082" stroke-width="1.300"/></svg>
<svg class="r" style="left:1728px;top:136px;" width="160" height="24" viewBox="0 0 160 24"><path d="M11.100 2.250L20.200 18.900H2Z" fill="#d3a01c"/><rect x="9.700" y="7.700" width="2.900" height="6" fill="#2b2b2b"/><rect x="9.700" y="15" width="2.900" height="1.900" fill="#2b2b2b"/>
<path d="M47 21L50.700 16.800L54.300 21L57.200 17.400L60.600 21L63.700 17.100" fill="none" stroke="#4a9e55" stroke-width="1.400"/>
<path d="M47.300 10.600L50.200 7.700L54.600 11.900L61.900 3.800L64.750 6.400L54.300 16.800Z" fill="#4a9e55" stroke="#2b2b2b" stroke-width="0.800" paint-order="stroke"/>
<path d="M105.200 15L111.200 9L117.200 15" fill="none" stroke="#b4b6b8" stroke-width="1.900"/><path d="M137 9L143 15L149 9" fill="none" stroke="#b4b6b8" stroke-width="1.900"/></svg>
<svg class="r" style="left:105px;top:658px;" width="25" height="24" viewBox="0 0 25 24"><g fill="#667075"><rect x="4.500" y="2.900" width="17.900" height="2.100"/><rect x="21.200" y="2.900" width="1.200" height="14.500"/><rect x="1.400" y="7" width="18.200" height="2.600"/></g><rect x="2" y="7.600" width="17" height="13.400" fill="none" stroke="#667075" stroke-width="1.200"/><rect x="4.200" y="11.500" width="12.600" height="7.500" fill="#3a6c84"/></svg>
<svg class="r" style="left:34px;top:695px;" width="90" height="260" viewBox="0 0 90 260"><path d="M13.800 9V27L28.600 18Z" fill="#499c54"/>
<path d="M10.200 64.300L13.400 67.500L22.700 58.200c2.600 0.900 5.600 0 7.200-2.600c0.900-1.500 1-3.300 0.500-4.800l-3.700 3.700l-3.300-0.900l-0.800-3.300l3.700-3.700c-2.400-0.700-5.100 0.300-6.500 2.600c-0.900 1.500-1 3.300-0.500 4.800z" fill="#afb1b3"/>
<rect x="4.900" y="81.200" width="30.100" height="1.500" fill="#595c5e"/>
<rect x="12.300" y="98.400" width="15.500" height="15.100" fill="#5c5e60"/>
<g fill="#5d6062"><path d="M9 140.700H13.600L15.800 135.900H22.400L24.600 140.700H31V154H9Z M20 141.300a5.100 5.100 0 1 0 0.010 0Z M20 143.600a2.800 2.800 0 1 1 -0.010 0Z" fill-rule="evenodd"/></g>
<path d="M15.200 174.300L18.900 178.200M24.700 174.300L21 178.200" fill="none" stroke="#5d6062" stroke-width="2.300"/>
<g fill="#5d6062"><path d="M14.200 180.200C15.500 177.200 24.500 177.200 25.800 180.200L25.800 183.600H17.300V185.100H20V187H17.300V189.900H20V194.800C17 194.800 14.200 193 14.200 189Z"/>
<rect x="11" y="180" width="3.400" height="2.200"/><rect x="11" y="185.100" width="3.400" height="2"/><rect x="11" y="189.900" width="3.400" height="2.100"/><rect x="25.600" y="180" width="3.400" height="2.200"/>
<path d="M23.300 185.200H32V194.200Z"/></g>
<path d="M22.400 193.800L28.500 187.900" fill="none" stroke="#5d6062" stroke-width="2.600"/>
<path d="M16 245.200L19.400 248.500L16 251.800M21.600 245.200L25 248.500L21.600 251.800" fill="none" stroke="#afb1b3" stroke-width="1.300"/>
<g fill="none" stroke="#5d6062" stroke-width="2.600"><path d="M64 28V11.500M57.300 18L64 10.800L70.700 18"/><path d="M64 49V65.600M57.300 59L64 66.300L70.700 59"/></g>
<g fill="#afb1b3"><rect x="54.900" y="87.800" width="18.100" height="3.200"/><rect x="54.900" y="102.700" width="4.900" height="3.300"/></g>
<path d="M54.900 96.600H69.500a3.800 3.800 0 0 1 0 7.700H66" fill="none" stroke="#afb1b3" stroke-width="3.200"/><path d="M67.500 99.800V108.800L62 104.300Z" fill="#afb1b3"/>
<g fill="#afb1b3"><rect x="55.200" y="128.400" width="5.800" height="2.700"/><rect x="55.200" y="134.700" width="5.800" height="2.900"/><rect x="55.200" y="140.500" width="17.800" height="3.400"/><rect x="67.400" y="125.200" width="2.900" height="9"/><path d="M63 133.200H74.400L68.700 139Z"/></g>
<g fill="#afb1b3"><rect x="58" y="166" width="12" height="4"/><rect x="53.300" y="172.200" width="21.400" height="7.300" rx="1.500"/></g><rect x="58.800" y="179.500" width="10.400" height="5.600" fill="none" stroke="#afb1b3" stroke-width="1.500"/><circle cx="72" cy="174.300" r="0.900" fill="#3c3f41"/>
<g fill="#afb1b3"><rect x="56.200" y="205.200" width="15.600" height="2.800"/><rect x="61.300" y="203.300" width="5.500" height="2.500"/><path d="M58 208.700H70V221.200a1.800 1.800 0 0 1 -1.800 1.800H59.800a1.800 1.800 0 0 1 -1.800 -1.800Z"/></g>
</svg>
<svg class="r" style="left:8px;top:155px;" width="19" height="15" viewBox="0 0 19 15"><path d="M0.500 0.800H7.500L9.700 3.300H18V14H0.500Z" fill="#b4b6b8"/></svg>
<svg class="r" style="left:9px;top:800px;" width="17" height="19" viewBox="0 0 17 19"><path d="M1.200 0.600H15.500V17.600L8.300 12L1.200 17.600Z" fill="#b2b4b6"/></svg>
<svg class="r" style="left:9px;top:923px;" width="17" height="16" viewBox="0 0 17 16"><g fill="#b2b4b6"><rect x="8.800" y="1" width="6.400" height="6.200"/><rect x="1" y="8.700" width="6.400" height="6.300"/><rect x="8.800" y="8.700" width="6.400" height="6.300"/></g></svg>
<svg class="r" style="left:1895px;top:100px;" width="22" height="24" viewBox="0 0 22 24"><path d="M10.500 4c3.600 0 5.900 2.600 5.900 6.200v4.600l2.300 2.700v1.300H2.300v-1.300l2.300-2.700v-4.600c0-3.600 2.300-6.200 5.900-6.200z" fill="#afb1b3"/><path d="M8.200 19.800h4.600a2.300 2.300 0 0 1 -4.600 0z" fill="#afb1b3"/><circle cx="16" cy="6.500" r="4.600" fill="#3c3f41"/><circle cx="16" cy="6.500" r="3.500" fill="#db5c5c"/></svg>
<svg class="r" style="left:48px;top:962px;" width="780" height="28" viewBox="0 0 780 28"><g fill="none" stroke="#afb1b3" stroke-width="2.100"><path d="M7.400 8.500V18.500"/><path d="M15.300 10.500c0 4-7.900 2.800-7.900 7"/></g><g fill="#afb1b3"><circle cx="7.400" cy="7.700" r="2.500"/><circle cx="7.400" cy="20" r="2.500"/><circle cx="15.300" cy="9.500" r="2.500"/></g>
<path d="M171.200 6.800V21L182.600 13.900Z" fill="#afb1b3"/>
<g fill="#afb1b3"><rect x="253.500" y="6.800" width="3.500" height="2.800"/><rect x="259" y="6.800" width="9.700" height="2.800"/><rect x="253.500" y="12" width="3.500" height="2.800"/><rect x="259" y="12" width="9.700" height="2.800"/><rect x="253.500" y="17.200" width="3.500" height="2.800"/><rect x="259" y="17.200" width="9.700" height="2.800"/></g>
<circle cx="359.100" cy="13" r="7.900" fill="#afb1b3"/><rect x="357.900" y="8" width="2.500" height="6.200" fill="#3c3f41"/><rect x="357.900" y="15.700" width="2.500" height="2.500" fill="#3c3f41"/>
<rect x="472.300" y="5.500" width="16.700" height="15" fill="#afb1b3"/><path d="M475 8.800L478.800 12L475 15.200" fill="none" stroke="#3c3f41" stroke-width="1.500"/><rect x="479.800" y="16" width="5.300" height="1.500" fill="#3c3f41"/>
<path d="M589 13.800L594 5.500H604L609 13.800L604 22.200H594Z" fill="#afb1b3"/><path d="M596 9.300V18.500L603.400 13.900Z" fill="#3c3f41"/>
<path d="M699.830 11.670L707.130 4.960L712.670 5.250L708.290 8.750L712.960 13.130L719.960 19.250L717.050 22.750L709.750 15.750L705.670 11.380L703.040 14.290Z" fill="#afb1b3"/>
</svg>
<svg class="r" style="left:7px;top:996px;" width="22" height="22" viewBox="0 0 22 22"><g fill="none" stroke="#afb1b3" stroke-width="1.400"><path d="M6.300 5.800V2.700H19.300V15.700H16.200"/><rect x="2.400" y="6" width="13.500" height="13.300"/></g></svg>
<svg class="r" style="left:1882px;top:996px;" width="22" height="22" viewBox="0 0 22 22"><rect x="7.500" y="9.300" width="11.500" height="9.300" fill="#afb1b3"/><path d="M9.500 9.300V6.500a3.200 3.200 0 0 0 -6.400 0V9" fill="none" stroke="#afb1b3" stroke-width="1.700"/></svg>
</body></html>
